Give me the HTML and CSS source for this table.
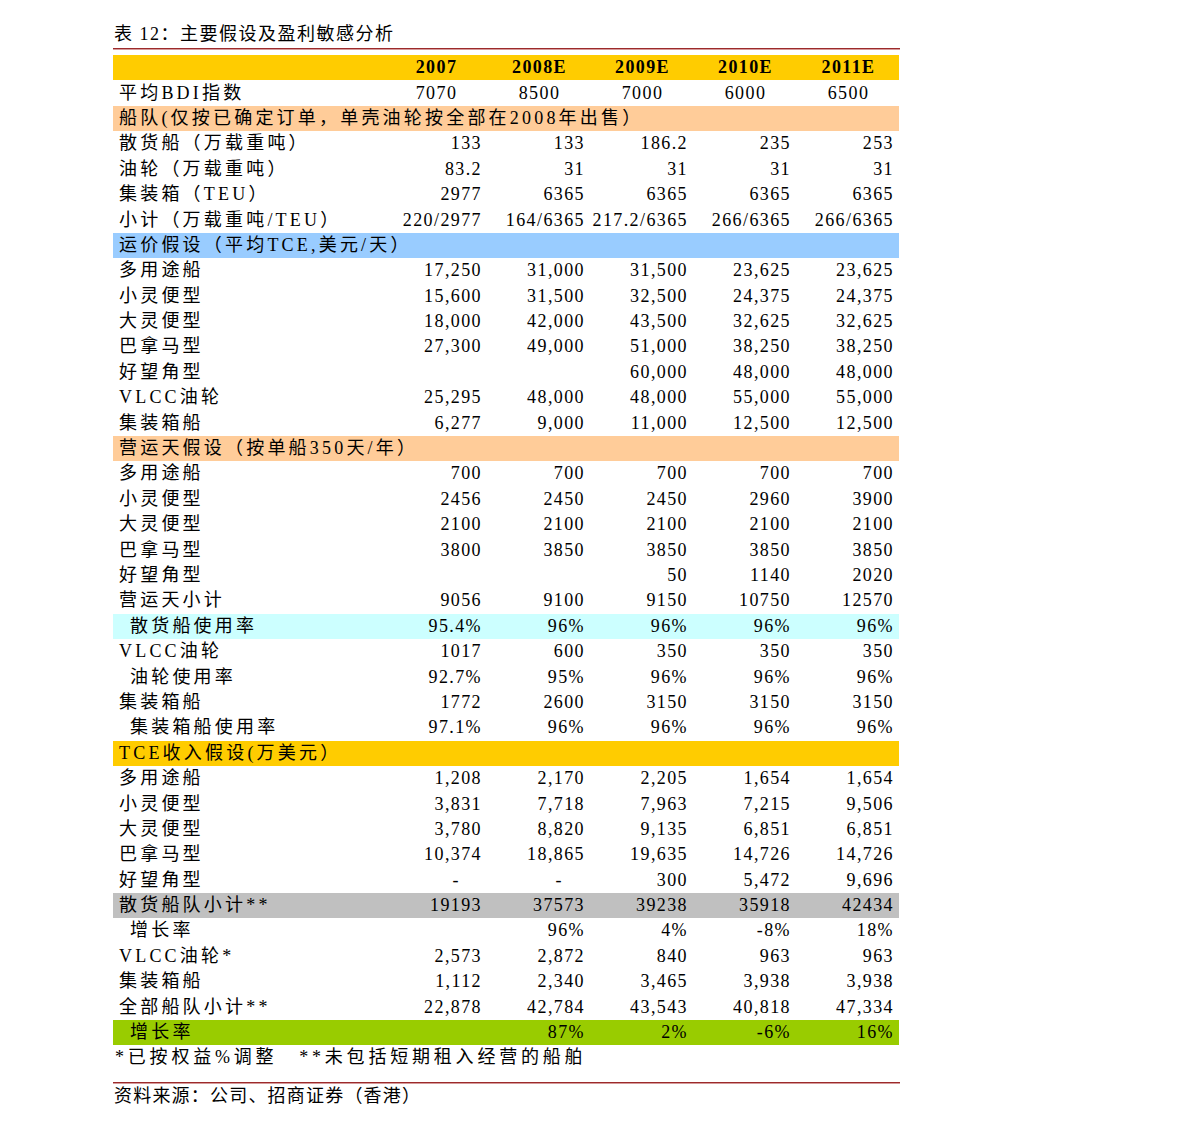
FILE: index.html
```html
<!DOCTYPE html>
<html lang="zh-CN">
<head>
<meta charset="utf-8">
<title>表 12：主要假设及盈利敏感分析</title>
<link rel="stylesheet" href="styles.css">
</head>
<body>
<div class="page">
  <div class="title">表 12：主要假设及盈利敏感分析</div>
  <div class="rule"></div>
  <table class="data">
    <colgroup>
      <col class="c-label"><col class="c-num"><col class="c-num"><col class="c-num"><col class="c-num"><col class="c-num">
    </colgroup>
    <tbody>
      <tr class="yellow head"><td></td><td>2007</td><td>2008E</td><td>2009E</td><td>2010E</td><td>2011E</td></tr>
      <tr class="center"><td class="lbl">平均BDI指数</td><td>7070</td><td>8500</td><td>7000</td><td>6000</td><td>6500</td></tr>
      <tr class="peach"><td class="lbl" colspan="6">船队(仅按已确定订单，单壳油轮按全部在2008年出售）</td></tr>
      <tr><td class="lbl">散货船（万载重吨）</td><td>133</td><td>133</td><td>186.2</td><td>235</td><td>253</td></tr>
      <tr><td class="lbl">油轮（万载重吨）</td><td>83.2</td><td>31</td><td>31</td><td>31</td><td>31</td></tr>
      <tr><td class="lbl">集装箱（TEU）</td><td>2977</td><td>6365</td><td>6365</td><td>6365</td><td>6365</td></tr>
      <tr><td class="lbl">小计（万载重吨/TEU）</td><td>220/2977</td><td>164/6365</td><td>217.2/6365</td><td>266/6365</td><td>266/6365</td></tr>
      <tr class="blue"><td class="lbl" colspan="6">运价假设（平均TCE,美元/天）</td></tr>
      <tr><td class="lbl">多用途船</td><td>17,250</td><td>31,000</td><td>31,500</td><td>23,625</td><td>23,625</td></tr>
      <tr><td class="lbl">小灵便型</td><td>15,600</td><td>31,500</td><td>32,500</td><td>24,375</td><td>24,375</td></tr>
      <tr><td class="lbl">大灵便型</td><td>18,000</td><td>42,000</td><td>43,500</td><td>32,625</td><td>32,625</td></tr>
      <tr><td class="lbl">巴拿马型</td><td>27,300</td><td>49,000</td><td>51,000</td><td>38,250</td><td>38,250</td></tr>
      <tr><td class="lbl">好望角型</td><td></td><td></td><td>60,000</td><td>48,000</td><td>48,000</td></tr>
      <tr><td class="lbl">VLCC油轮</td><td>25,295</td><td>48,000</td><td>48,000</td><td>55,000</td><td>55,000</td></tr>
      <tr><td class="lbl">集装箱船</td><td>6,277</td><td>9,000</td><td>11,000</td><td>12,500</td><td>12,500</td></tr>
      <tr class="peach"><td class="lbl" colspan="6">营运天假设（按单船350天/年）</td></tr>
      <tr><td class="lbl">多用途船</td><td>700</td><td>700</td><td>700</td><td>700</td><td>700</td></tr>
      <tr><td class="lbl">小灵便型</td><td>2456</td><td>2450</td><td>2450</td><td>2960</td><td>3900</td></tr>
      <tr><td class="lbl">大灵便型</td><td>2100</td><td>2100</td><td>2100</td><td>2100</td><td>2100</td></tr>
      <tr><td class="lbl">巴拿马型</td><td>3800</td><td>3850</td><td>3850</td><td>3850</td><td>3850</td></tr>
      <tr><td class="lbl">好望角型</td><td></td><td></td><td>50</td><td>1140</td><td>2020</td></tr>
      <tr><td class="lbl">营运天小计</td><td>9056</td><td>9100</td><td>9150</td><td>10750</td><td>12570</td></tr>
      <tr class="cyan"><td class="lbl ind">散货船使用率</td><td>95.4%</td><td>96%</td><td>96%</td><td>96%</td><td>96%</td></tr>
      <tr><td class="lbl">VLCC油轮</td><td>1017</td><td>600</td><td>350</td><td>350</td><td>350</td></tr>
      <tr><td class="lbl ind">油轮使用率</td><td>92.7%</td><td>95%</td><td>96%</td><td>96%</td><td>96%</td></tr>
      <tr><td class="lbl">集装箱船</td><td>1772</td><td>2600</td><td>3150</td><td>3150</td><td>3150</td></tr>
      <tr><td class="lbl ind">集装箱船使用率</td><td>97.1%</td><td>96%</td><td>96%</td><td>96%</td><td>96%</td></tr>
      <tr class="yellow"><td class="lbl" colspan="6">TCE收入假设(万美元）</td></tr>
      <tr><td class="lbl">多用途船</td><td>1,208</td><td>2,170</td><td>2,205</td><td>1,654</td><td>1,654</td></tr>
      <tr><td class="lbl">小灵便型</td><td>3,831</td><td>7,718</td><td>7,963</td><td>7,215</td><td>9,506</td></tr>
      <tr><td class="lbl">大灵便型</td><td>3,780</td><td>8,820</td><td>9,135</td><td>6,851</td><td>6,851</td></tr>
      <tr><td class="lbl">巴拿马型</td><td>10,374</td><td>18,865</td><td>19,635</td><td>14,726</td><td>14,726</td></tr>
      <tr><td class="lbl">好望角型</td><td class="dash">-</td><td class="dash">-</td><td>300</td><td>5,472</td><td>9,696</td></tr>
      <tr class="gray"><td class="lbl">散货船队小计**</td><td>19193</td><td>37573</td><td>39238</td><td>35918</td><td>42434</td></tr>
      <tr><td class="lbl ind">增长率</td><td></td><td>96%</td><td>4%</td><td>-8%</td><td>18%</td></tr>
      <tr><td class="lbl">VLCC油轮*</td><td>2,573</td><td>2,872</td><td>840</td><td>963</td><td>963</td></tr>
      <tr><td class="lbl">集装箱船</td><td>1,112</td><td>2,340</td><td>3,465</td><td>3,938</td><td>3,938</td></tr>
      <tr><td class="lbl">全部船队小计**</td><td>22,878</td><td>42,784</td><td>43,543</td><td>40,818</td><td>47,334</td></tr>
      <tr class="green"><td class="lbl ind">增长率</td><td></td><td>87%</td><td>2%</td><td>-6%</td><td>16%</td></tr>
      <tr class="note"><td class="lbl" colspan="6">*已按权益%调整　**未包括短期租入经营的船舶</td></tr>
    </tbody>
  </table>
  <div class="rule bottom"></div>
  <div class="source">资料来源：公司、招商证券（香港）</div>
</div>
</body>
</html>
```
FILE: styles.css
```css
html, body {
  margin: 0;
  padding: 0;
  background: #ffffff;
}

body {
  font-family: "Liberation Serif", "Noto Sans CJK SC", serif;
  color: #000000;
}

.page {
  width: 787px;
  margin-left: 113px;
  padding-top: 22px;
}

.title {
  font-size: 18px;
  line-height: 24px;
  height: 24px;
  letter-spacing: 1.5px;
  padding-left: 1px;
}

.rule {
  margin-top: 2px;
  height: 1px;
  background: #9c2a2b;
  border-bottom: 1px solid #d59a9a;
}

.data {
  margin-top: 5px;
  width: 786px;
  table-layout: fixed;
  border-collapse: collapse;
  border-spacing: 0;
  font-size: 18px;
}

.c-label { width: 271px; }
.c-num { width: 103px; }

.data td {
  height: 25.4px;
  padding: 0 5px 0 0;
  line-height: 25px;
  text-align: right;
  white-space: nowrap;
  letter-spacing: 1.4px;
  vertical-align: middle;
  overflow: visible;
}

.data td.lbl {
  text-align: left;
  padding: 0 0 0 6px;
  letter-spacing: 3.2px;
}

.data td.ind { padding-left: 17px; }
.data td.dash { padding-right: 27px; }

.head td {
  text-align: center;
  font-weight: bold;
  padding: 0 0 0 2px;
}

.center td { text-align: center; padding: 0 0 0 2px; }

.yellow { background: #ffcc00; }
.peach { background: #ffcc99; }
.blue { background: #99ccff; }
.cyan { background: #ccffff; }
.gray { background: #c0c0c0; }
.green { background: #99cc00; }

.note td.lbl { letter-spacing: 3.8px; padding-left: 2px; }

.rule.bottom { margin-top: 11px; }

.source {
  font-size: 18px;
  line-height: 24px;
  letter-spacing: 1.2px;
  padding-left: 1px;
}
```
